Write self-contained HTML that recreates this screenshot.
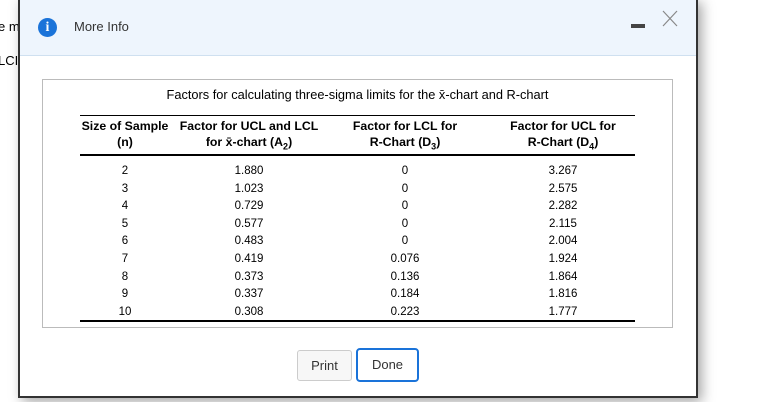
<!DOCTYPE html>
<html><head><style>
body{margin:0;width:776px;height:402px;background:#fff;position:relative;overflow:hidden;font-family:"Liberation Sans",Arial,sans-serif;}
.bgtxt{position:absolute;left:-2px;font-size:13px;color:#000}
.dlg{position:absolute;left:18px;top:-2px;width:676px;height:396px;border:2px solid #333;background:#fff;box-shadow:4px 4px 12px rgba(0,0,0,.35)}
.hdr{position:absolute;left:0;top:0;width:676px;height:55px;background:#eef5fd;border-bottom:1px solid #cfe0f0}
.ic{position:absolute;left:18px;top:18px;width:19px;height:19px;border-radius:50%;background:#1a73d9;color:#fff;font:bold 14px/19px "Liberation Serif",serif;text-align:center}
.ttl{position:absolute;left:54px;top:19px;font-size:13px;color:#333}
.min{position:absolute;left:611px;top:24px;width:14px;height:4px;background:#444}
.box{position:absolute;left:22px;top:79px;width:629px;height:247px;border:1px solid #bbb}
.cap{position:absolute;left:0;width:100%;top:7px;text-align:center;font-size:12.8px}
.t{position:absolute;font-size:11.5px;text-align:center;transform:translateX(-50%);white-space:nowrap}
.b{font-weight:bold;line-height:16px;font-size:12.3px}
.ln{position:absolute;left:37px;width:555px;background:#000}
.btn{position:absolute;font-size:13px;color:#333;text-align:center;border-radius:3px}
</style></head><body>
<div class="bgtxt" style="top:19px">e m</div>
<div class="bgtxt" style="top:53px">LCI</div>
<div class="dlg">
<div class="hdr"><div class="ic">i</div><div class="ttl">More Info</div><div class="min"></div>
<svg style="position:absolute;left:642px;top:10px" width="16" height="17"><path d="M1 1L15 16M15 1L1 16" stroke="#888" stroke-width="1.2"/></svg></div>
<div class="box">
<div class="cap">Factors for calculating three-sigma limits for the x̄-chart and R-chart</div>
<div class="ln" style="top:35px;height:1px"></div>
<div class="ln" style="top:74px;height:2px"></div>
<div class="ln" style="top:240px;height:2px"></div>
<div class="t b" style="left:82px;top:38px">Size of Sample<br>(n)</div>
<div class="t b" style="left:206px;top:38px">Factor for UCL and LCL<br>for x̄-chart (A<sub style="font-size:9px">2</sub>)</div>
<div class="t b" style="left:362px;top:38px">Factor for LCL for<br>R-Chart (D<sub style="font-size:9px">3</sub>)</div>
<div class="t b" style="left:520px;top:38px">Factor for UCL for<br>R-Chart (D<sub style="font-size:9px">4</sub>)</div>
</div>
<div style="position:absolute;left:22px;top:79px">
<div class="t" style="left:83px;top:84px;line-height:17.6px">2<br>3<br>4<br>5<br>6<br>7<br>8<br>9<br>10</div>
<div class="t" style="left:207px;top:84px;line-height:17.6px">1.880<br>1.023<br>0.729<br>0.577<br>0.483<br>0.419<br>0.373<br>0.337<br>0.308</div>
<div class="t" style="left:363px;top:84px;line-height:17.6px">0<br>0<br>0<br>0<br>0<br>0.076<br>0.136<br>0.184<br>0.223</div>
<div class="t" style="left:521px;top:84px;line-height:17.6px">3.267<br>2.575<br>2.282<br>2.115<br>2.004<br>1.924<br>1.864<br>1.816<br>1.777</div>
</div>
<div class="btn" style="left:277px;top:350px;width:53px;height:29px;line-height:29px;border:1px solid #ccc;background:#f7f7f7">Print</div>
<div class="btn" style="left:336px;top:348px;width:59px;height:30px;line-height:30px;border:2px solid #1a73d9;border-radius:4px;background:#fff">Done</div>
</div>
</body></html>
